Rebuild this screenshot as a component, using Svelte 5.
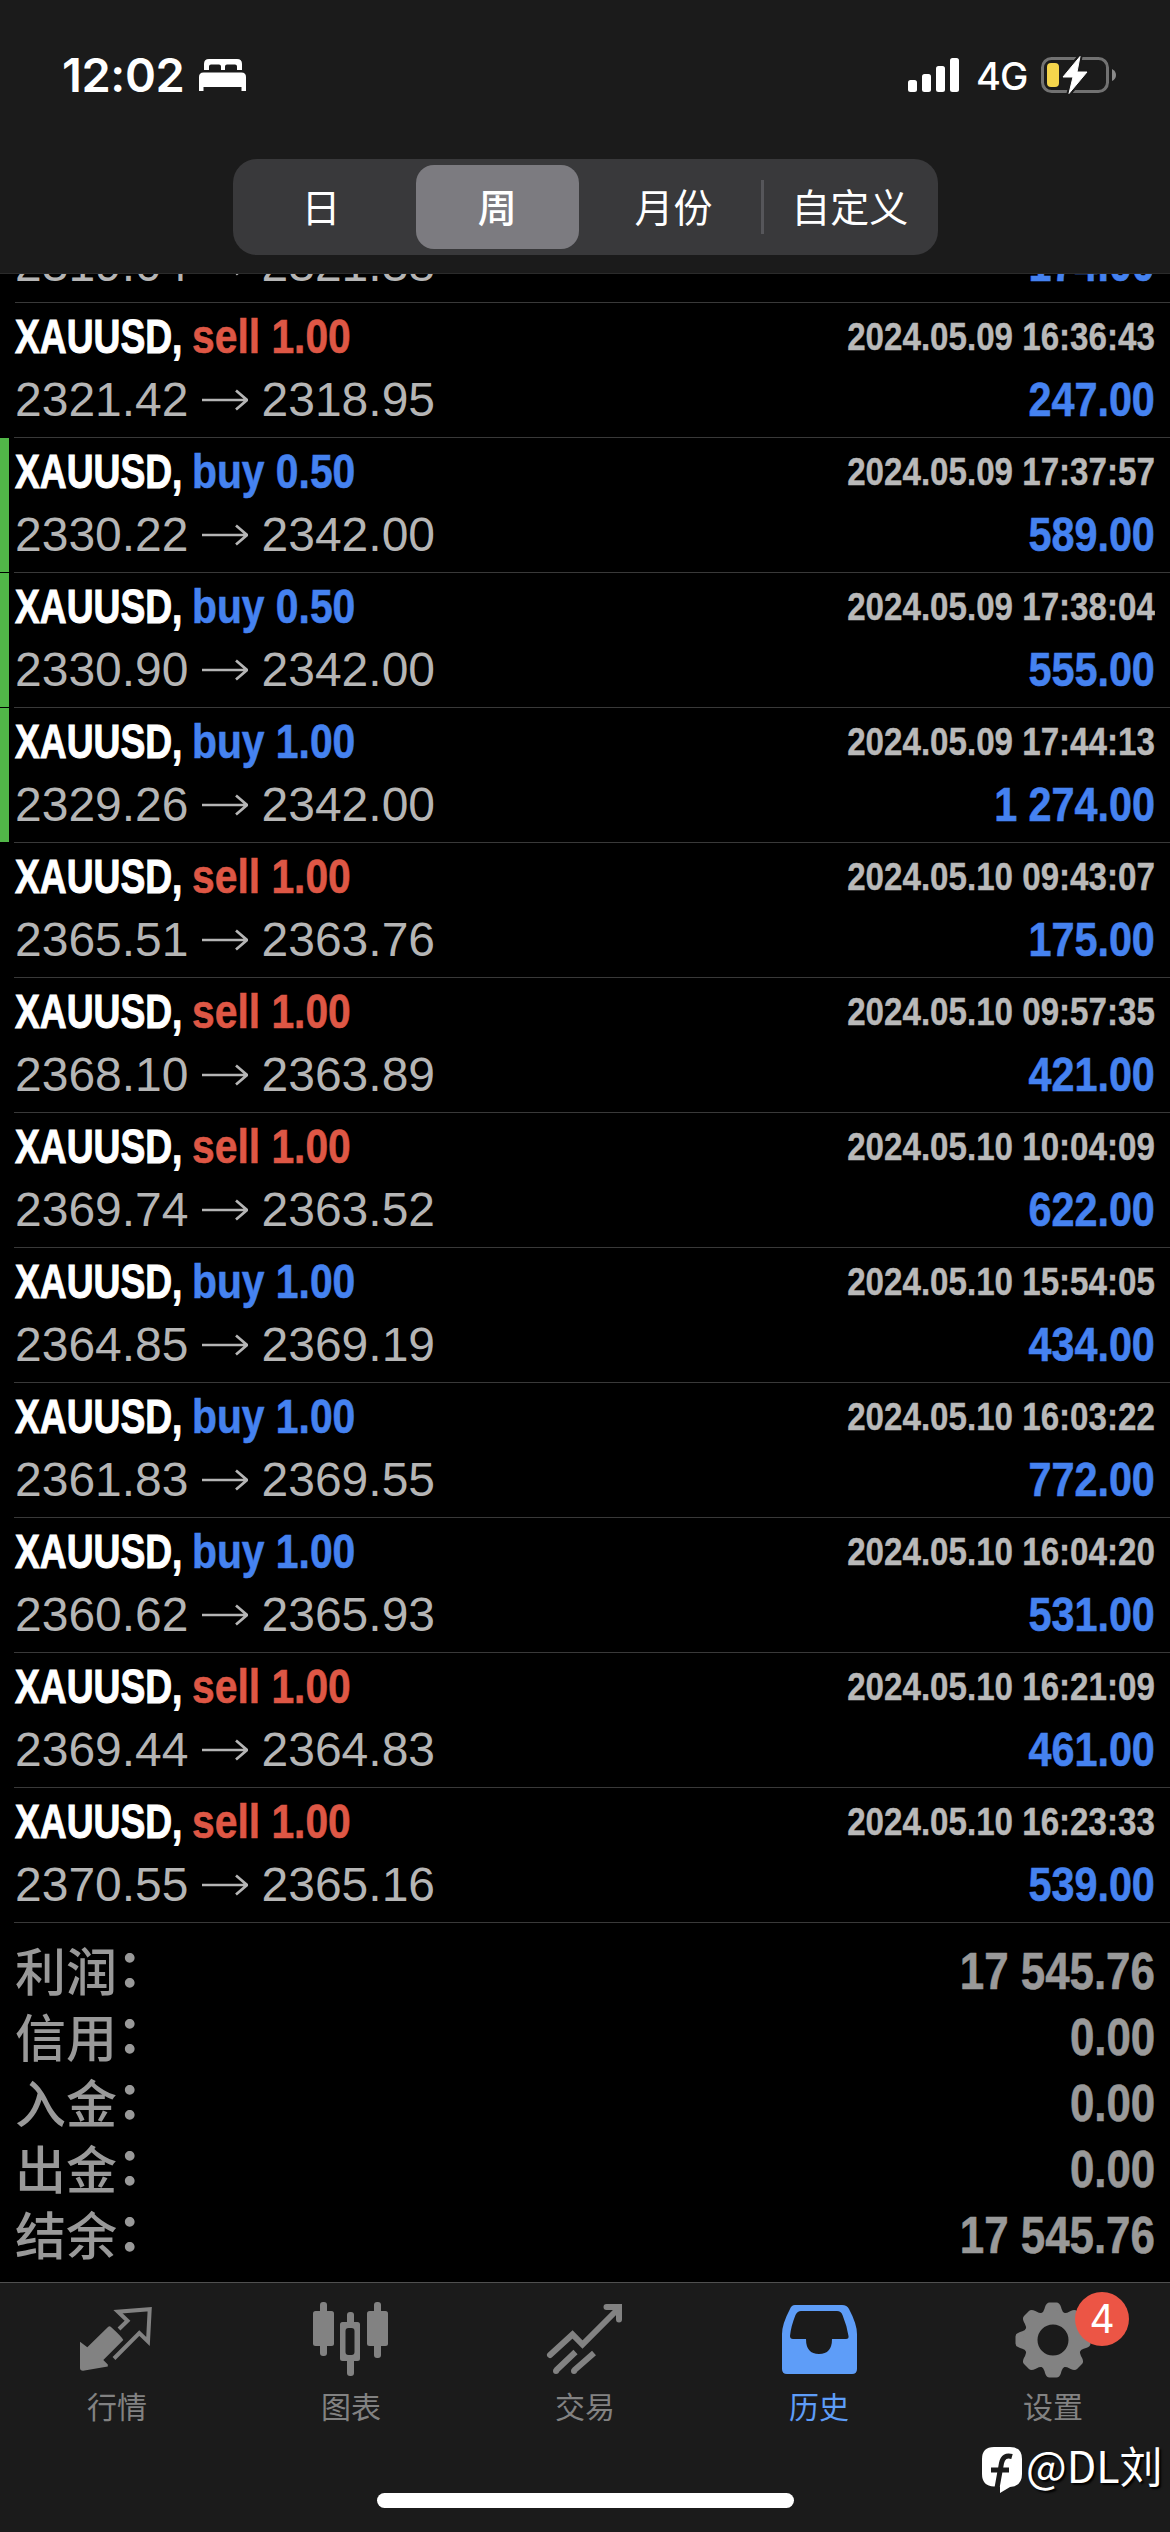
<script>
  const periods = ['日', '周', '月份', '自定义'];
  const activePeriod = '周';

  const deals = [
    { side: 'sell', lots: '1.00', time: '2024.05.09 16:36:43', from: '2321.42', to: '2318.95', profit: '247.00' },
    { side: 'buy', lots: '0.50', time: '2024.05.09 17:37:57', from: '2330.22', to: '2342.00', profit: '589.00', marked: true },
    { side: 'buy', lots: '0.50', time: '2024.05.09 17:38:04', from: '2330.90', to: '2342.00', profit: '555.00', marked: true },
    { side: 'buy', lots: '1.00', time: '2024.05.09 17:44:13', from: '2329.26', to: '2342.00', profit: '1 274.00', marked: true },
    { side: 'sell', lots: '1.00', time: '2024.05.10 09:43:07', from: '2365.51', to: '2363.76', profit: '175.00' },
    { side: 'sell', lots: '1.00', time: '2024.05.10 09:57:35', from: '2368.10', to: '2363.89', profit: '421.00' },
    { side: 'sell', lots: '1.00', time: '2024.05.10 10:04:09', from: '2369.74', to: '2363.52', profit: '622.00' },
    { side: 'buy', lots: '1.00', time: '2024.05.10 15:54:05', from: '2364.85', to: '2369.19', profit: '434.00' },
    { side: 'buy', lots: '1.00', time: '2024.05.10 16:03:22', from: '2361.83', to: '2369.55', profit: '772.00' },
    { side: 'buy', lots: '1.00', time: '2024.05.10 16:04:20', from: '2360.62', to: '2365.93', profit: '531.00' },
    { side: 'sell', lots: '1.00', time: '2024.05.10 16:21:09', from: '2369.44', to: '2364.83', profit: '461.00' },
    { side: 'sell', lots: '1.00', time: '2024.05.10 16:23:33', from: '2370.55', to: '2365.16', profit: '539.00' }
  ];

  const totals = [
    ['利润', '17 545.76'],
    ['信用', '0.00'],
    ['入金', '0.00'],
    ['出金', '0.00'],
    ['结余', '17 545.76']
  ];
</script>

{#snippet prices(from, to, profit)}
  <div class="line second">
    <span class="price">{from}</span>
    <svg class="arrow" width="46" height="22" viewBox="0 0 46 22">
      <path d="M0 11H44M34 1.5L45 11L34 20.5" fill="none" stroke="currentColor" stroke-width="2.7" />
    </svg>
    <span class="price">{to}</span>
    <span class="profit">{profit}</span>
  </div>
{/snippet}

<div class="screen">
  <header>
    <div class="status">
      <span class="clock">12:02</span>
      <svg class="bed" width="48" height="32" viewBox="0 0 48 32" fill="#fff">
        <path d="M5 11V5q0-5 5-5h28q5 0 5 5v6h-5V7.500q0-2-2-2h-8q-2 0-2 2V11h-4V7.500q0-2-2-2h-8q-2 0-2 2V11z" />
        <path d="M0 32V18q0-4.500 4.500-4.500h38q4.500 0 4.500 4.500v14h-4.500v-4h-38v4z" />
      </svg>
      <span class="grow"></span>
      <svg class="signal" width="52" height="34" viewBox="0 0 52 34" fill="#fff">
        <rect x="0" y="22" width="9" height="12" rx="2.500" />
        <rect x="14" y="16" width="9" height="18" rx="2.500" />
        <rect x="28" y="8" width="9" height="26" rx="2.500" />
        <rect x="42" y="0" width="9" height="34" rx="2.500" />
      </svg>
      <span class="net">4G</span>
      <svg class="battery" width="76" height="40" viewBox="0 0 76 40">
        <rect x="1.500" y="3.500" width="65" height="33" rx="9" fill="none" stroke="#727272" stroke-width="3" />
        <path d="M71 14q4 2 4 6t-4 6z" fill="#8a8a8a" />
        <rect x="6" y="8" width="12" height="24" rx="4" fill="#f5d54c" />
        <path d="M39 1.500L22 22h10l-4 16.500L46 17H36z" fill="#fff" stroke="#1b1b1b" stroke-width="5" stroke-linejoin="round" />
        <path d="M39 1.500L22 22h10l-4 16.500L46 17H36z" fill="#fff" stroke="#fff" stroke-width="1" stroke-linejoin="round" />
      </svg>
    </div>
    <div class="segments">
      {#each periods as p, i}
        <div class="segment" class:active={p === activePeriod} class:ruled={i === 3}><span>{p}</span></div>
      {/each}
    </div>
  </header>

  <main>
    <div class="clipped">{@render prices('2319.04', '2321.38', '174.00')}</div>
    {#each deals as d}
      <section class="deal" class:marked={d.marked}>
        <div class="line first">
          <span class="symbol"><b>XAUUSD,</b></span>
          <span class="side {d.side}">{d.side} {d.lots}</span>
          <span class="time">{d.time}</span>
        </div>
        {@render prices(d.from, d.to, d.profit)}
      </section>
    {/each}
    <div class="totals">
      {#each totals as [name, value]}
        <div class="total"><span class="name">{name}<i>：</i></span><span class="value">{value}</span></div>
      {/each}
    </div>
  </main>

  <footer>
    <nav>
      <div class="tab">
        <svg width="78" height="78" viewBox="0 0 78 78">
          <path d="M2 37.700L9.300 43.300L30 23Q31.500 21.500 33 23Q44 33 45.300 36L25.300 56L29.800 60.500V62.500L5 66.700Q2 66.700 2 64z" fill="currentColor" />
          <path d="M41 25L49.500 16.700L40 7.700L71.700 5.200L70 37.500L61.300 29L36 54.500" fill="none" stroke="currentColor" stroke-width="4" />
        </svg>
        <span>行情</span>
      </div>
      <div class="tab">
        <svg width="78" height="78" viewBox="0 0 78 78" fill="currentColor">
          <rect x="1" y="7" width="21" height="35" rx="2.500" />
          <rect x="8" y="-2" width="7" height="54" rx="3" />
          <rect x="55" y="7" width="21" height="35" rx="2.500" />
          <rect x="62" y="-2" width="7" height="56" rx="3" />
          <path fill-rule="evenodd" d="M30.500 18h15q2.500 0 2.500 2.500v34q0 2.500-2.500 2.500h-15q-2.500 0-2.500-2.500v-34Q28 18 30.500 18zM36.500 24q-3 0-3 3v21q0 3 3 3h3q3 0 3-3V27q0-3-3-3z" />
          <rect x="35" y="8" width="7" height="14" rx="3" />
          <rect x="35" y="53" width="7" height="19" rx="3" />
        </svg>
        <span>图表</span>
      </div>
      <div class="tab">
        <svg width="78" height="78" viewBox="0 0 78 78" fill="none" stroke="currentColor" stroke-width="6">
          <path d="M4 51L26.500 30.500L36.500 40.500L71 6" stroke-linecap="round" />
          <path d="M60.500 3H73V15.500" stroke-linecap="round" />
          <path d="M29.500 48L10 66.500M48 49L28 66.500" />
          <path d="M10 67h0M28 67h0" stroke-linecap="round" />
        </svg>
        <span>交易</span>
      </div>
      <div class="tab current">
        <svg width="78" height="78" viewBox="0 0 78 78" fill="currentColor">
          <path fill-rule="evenodd" d="M15 1H62Q67 1 69 5Q77 20 77 30V65Q77 70 72 70H7Q2 70 2 65V30Q2 20 10 5Q11.500 1 15 1zM21 7Q17.500 7 15.500 11Q11 22 10 32Q10 35 13 35H26Q26 50 39 50Q52 50 52 35H66Q69 35 68.500 32Q67 22 62.500 11Q61 7 57 7z" />
        </svg>
        <span>历史</span>
      </div>
      <div class="tab">
        <svg width="78" height="78" viewBox="-39 -39 78 78" fill="currentColor">
          <g transform="translate(0 -3)">
            {#each [0, 45, 90, 135, 180, 225, 270, 315] as a}
              <path transform="rotate({a})" d="M-13 -25Q-9 -28 -8 -33Q-6.500 -37.500 -3.500 -37.500H3.500Q6.500 -37.500 8 -33Q9 -28 13 -25z" />
            {/each}
            <circle r="22.500" fill="none" stroke="currentColor" stroke-width="14" />
          </g>
        </svg>
        <span>设置</span>
        <em class="badge">4</em>
      </div>
    </nav>
    <div class="home"></div>
    <div class="credit">
      <svg width="44" height="50" viewBox="0 0 44 50">
        <path d="M13 1H29Q41 1 41 13V28Q41 40 29 41L19 47V40.500H13Q1 40 1 28V13Q1 1 13 1z" fill="#fff" />
        <path d="M31 10.500Q22.500 8 20.500 17L16 42M10 24H28" fill="none" stroke="#1b1b1b" stroke-width="5" />
      </svg>
      <span>@DL刘</span>
    </div>
  </footer>
</div>

<style>
  :global(body) { background: #000; }
  .screen {
    width: 1170px;
    height: 2532px;
    display: flex;
    flex-direction: column;
    overflow: hidden;
    background: #000;
    color: #fff;
    font-family: 'Liberation Sans', 'Noto Sans CJK SC', sans-serif;
  }
  header {
    height: 274px;
    flex: none;
    box-sizing: border-box;
    background: #1b1b1b;
    border-bottom: 1px solid #2b2b2b;
  }
  .status {
    display: flex;
    align-items: center;
    height: 149px;
    padding: 0 53px 0 62px;
    font-family: Inter, sans-serif;
  }
  .clock { width: 137px; font-size: 47px; font-weight: 600; letter-spacing: -0.4px; white-space: nowrap; }
  .bed, .signal { display: block; }
  .grow { flex: 1; }
  .net { width: 65px; padding-left: 16px; box-sizing: border-box; margin-right: 16px; font-size: 38px; font-weight: 500; letter-spacing: -1px; transform: translateY(1px); }
  .segments {
    display: grid;
    grid-template-columns: repeat(4, 1fr);
    width: 705px;
    height: 96px;
    margin: 10px 0 0 233px;
    padding: 6px 0;
    box-sizing: border-box;
    border-radius: 24px;
    background: #39393b;
  }
  .segment {
    display: flex;
    align-items: center;
    justify-content: center;
    position: relative;
    font-family: 'Noto Sans CJK SC', sans-serif;
    font-size: 39px;
    line-height: 78px;
  }
  .segment span { padding-bottom: 5px; }
  .segment.active { margin: 0 7px; border-radius: 18px; background: #7c7b80; font-weight: 500; }
  .segment.ruled::before { content: ''; position: absolute; left: -1px; top: 15px; width: 3px; height: 54px; background: #56565a; }
  main { flex: none; height: 2008px; overflow: hidden; }
  .clipped { height: 29px; box-sizing: border-box; display: flex; flex-direction: column; justify-content: flex-end; overflow: hidden; border-bottom: 1px solid #393939; margin-left: 15px; }
  .clipped .line { margin-left: -15px; width: 1170px; flex: none; }
  .deal {
    height: 135px;
    box-sizing: border-box;
    padding-top: 7px;
    border-bottom: 1px solid #393939;
    border-image: linear-gradient(90deg, #000 15px, #393939 15px) 1;
  }
  .deal.marked { background: linear-gradient(90deg, #51b748 9px, transparent 9px) padding-box; }
  .line { display: flex; align-items: center; box-sizing: border-box; padding: 0 15px; white-space: nowrap; }
  .first { height: 54px; font-size: 48px; font-weight: 700; line-height: 54px; }
  .symbol { width: 177px; }
  .symbol b { display: inline-block; transform: scaleX(.775); transform-origin: left; -webkit-text-stroke: 1px; }
  .side { transform: scaleX(.85); transform-origin: left; -webkit-text-stroke: 0.6px; }
  .sell { color: #de5745; }
  .buy { color: #4582f0; }
  .time { margin-left: auto; font-size: 38px; color: #b9b9b9; transform: scaleX(.872); transform-origin: right; -webkit-text-stroke: 0.4px; }
  .second { height: 73px; padding-bottom: 2px; font-size: 48px; line-height: 54px; color: #b5b5b5; }
  .arrow { margin: 0 14px 0 13px; flex: none; }
  .profit { margin-left: auto; color: #4582f0; font-weight: 700; transform: scaleX(.86); transform-origin: right; -webkit-text-stroke: 0.6px; }
  .totals { padding: 16px 15px 0; }
  .total { display: flex; justify-content: space-between; align-items: center; height: 66px; color: #999; }
  .name { font-family: 'Noto Sans CJK SC', sans-serif; font-size: 51px; font-weight: 500; line-height: 60px; padding-bottom: 6px; }
  .name i { display: inline-block; font-style: normal; font-weight: 700; transform: translateY(-4px); }
  .value { font-size: 51px; line-height: 60px; font-weight: 700; transform: scaleX(.86); transform-origin: right; -webkit-text-stroke: 0.6px; }
  footer { position: relative; flex: 1; background: #1b1b1b; border-top: 1px solid #505050; box-sizing: border-box; }
  nav { display: grid; grid-template-columns: repeat(5, 234px); height: 210px; }
  .tab { position: relative; display: flex; flex-direction: column; align-items: center; padding-top: 21px; color: #828282; }
  .tab svg { overflow: visible; flex: none; }
  .tab span { margin-top: 1px; font-family: 'Noto Sans CJK SC', sans-serif; font-size: 30px; line-height: 44px; }
  .current { color: #5e9df8; }
  .badge { position: absolute; left: 139px; top: 9px; width: 54px; height: 54px; border-radius: 50%; background: #ec5545; color: #fff; font: 400 39px/54px Inter, sans-serif; text-align: center; }
  .home { width: 417px; height: 15px; margin: 0 auto; border-radius: 8px; background: #fff; }
  .credit { position: absolute; left: 981px; top: 163px; display: flex; align-items: flex-start; gap: 1px; font-family: 'Noto Sans CJK SC', sans-serif; font-size: 43px; line-height: 36px; white-space: nowrap; text-shadow: 2px 2px 2px #000; }
</style>
